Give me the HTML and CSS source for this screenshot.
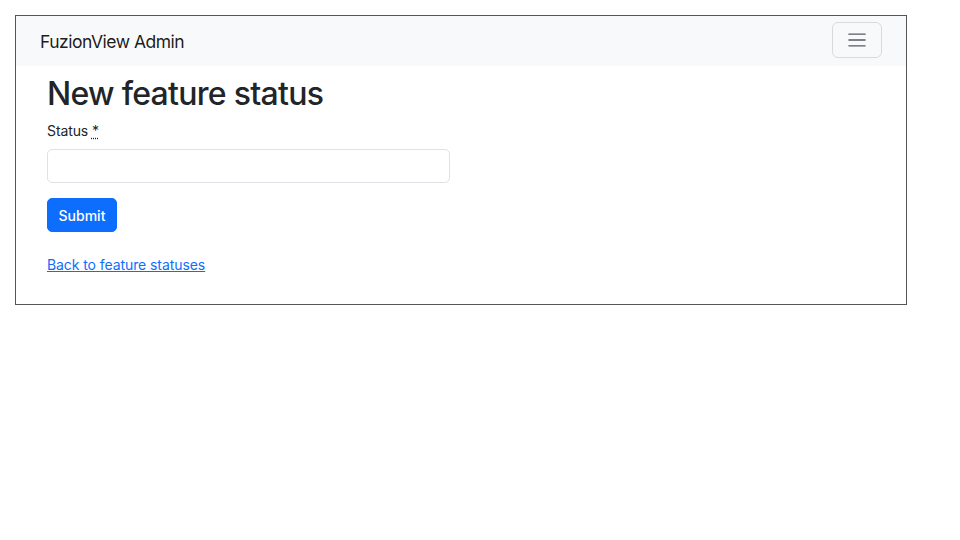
FILE: index.html
```html
<!DOCTYPE html>
<html lang="en">
<head>
<meta charset="utf-8">
<title>New feature status</title>
<link rel="stylesheet" href="styles.css">
</head>
<body>
<div class="frame">
  <nav class="navbar">
    <span class="brand">FuzionView Admin</span>
    <button class="toggler" type="button" aria-label="Toggle navigation">
      <svg width="22" height="22" viewBox="0 0 30 30" aria-hidden="true">
        <path d="M4 7h22M4 15h22M4 23h22" stroke="rgba(33,37,41,0.75)" stroke-width="2" stroke-linecap="round" fill="none"/>
      </svg>
    </button>
  </nav>
  <main class="content">
    <h1 class="title">New feature status</h1>
    <form class="form">
      <div class="field">
        <label class="label" for="status">Status <abbr class="req" title="required">*</abbr></label>
        <input class="input" id="status" type="text">
      </div>
      <button class="btn" type="button">Submit</button>
    </form>
    <p class="back"><a href="#" class="link">Back to feature statuses</a></p>
  </main>
</div>
</body>
</html>
```

FILE: styles.css
```css
* { box-sizing: border-box; }
html, body { margin: 0; padding: 0; background: #fff; }
body {
  font-family: Inter, "Liberation Sans", Arial, sans-serif;
  font-size: 14px;
  line-height: 1.5;
  color: #212529;
}
.frame {
  margin: 15px;
  width: 892px;
  border: 1px solid #555;
}
.navbar {
  height: 50px;
  background: #f8f9fa;
  display: flex;
  align-items: center;
  justify-content: space-between;
  padding: 0 24px;
}
.brand {
  font-size: 17.5px;
  color: rgba(0,0,0,0.9);
  line-height: 1;
  padding-top: 1px;
  letter-spacing: -0.5px;
}
.toggler {
  width: 50px;
  height: 36px;
  border: 1px solid rgba(0,0,0,0.12);
  border-radius: 6px;
  background: transparent;
  display: flex;
  align-items: center;
  justify-content: center;
  padding: 0;
  margin-top: -2px;
}
.toggler svg { display: block; }
.content {
  padding: 9px 31px 15px;
}
.title {
  font-size: 32px;
  font-weight: 550;
  line-height: 1.2;
  margin: 0 0 7px;
  letter-spacing: -0.72px;
}
.form { margin: 0; }
.field { margin-bottom: 15px; }
.label {
  display: block;
  margin-bottom: 8px;
  letter-spacing: -0.1px;
}
.req {
  text-decoration: underline dotted;
  cursor: help;
}
.input {
  display: block;
  width: 403px;
  height: 34px;
  padding: 5px 10px;
  font: inherit;
  border: 1px solid #dee2e6;
  border-radius: 5px;
  background: #fff;
}
.btn {
  display: block;
  width: 70px;
  height: 34px;
  font: inherit;
  font-weight: 500;
  color: #fff;
  background: #0d6efd;
  border: 1px solid #0d6efd;
  border-radius: 5px;
  padding: 0;
}
.back {
  margin: 22px 0 14px;
}
.link {
  color: #0d6efd;
  text-decoration: underline;
  letter-spacing: -0.08px;
}
```
